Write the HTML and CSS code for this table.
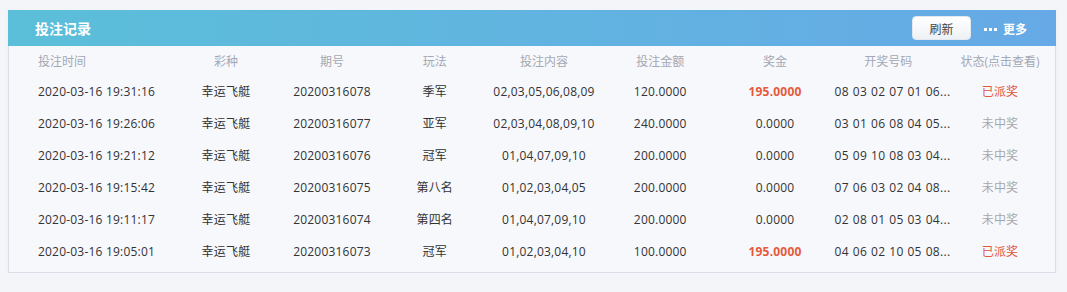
FILE: index.html
```html
<!DOCTYPE html>
<html lang="zh-CN">
<head>
    <meta charset="UTF-8">
    <title>投注记录</title>
    <link rel="stylesheet" href="styles.css">
</head>
<body>
    <div class="panel">
        <!-- Header bar -->
        <div class="panel-head">
            <h2>投注记录</h2>
            <div class="head-actions">
                <button class="refresh">刷新</button>
                <a class="more"><span class="dots"></span>更多</a>
            </div>
        </div>

        <!-- Records -->
        <div class="records">
            <div class="row head">
                <div class="first">投注时间</div>
                <div>彩种</div>
                <div>期号</div>
                <div>玩法</div>
                <div>投注内容</div>
                <div>投注金额</div>
                <div>奖金</div>
                <div>开奖号码</div>
                <div>状态(点击查看)</div>
            </div>
            <div class="row">
                <div class="first">2020-03-16 19:31:16</div>
                <div>幸运飞艇</div>
                <div>20200316078</div>
                <div>季军</div>
                <div>02,03,05,06,08,09</div>
                <div>120.0000</div>
                <div class="win">195.0000</div>
                <div class="nums">08 03 02 07 01 06...</div>
                <div class="paid">已派奖</div>
            </div>
            <div class="row">
                <div class="first">2020-03-16 19:26:06</div>
                <div>幸运飞艇</div>
                <div>20200316077</div>
                <div>亚军</div>
                <div>02,03,04,08,09,10</div>
                <div>240.0000</div>
                <div>0.0000</div>
                <div class="nums">03 01 06 08 04 05...</div>
                <div class="lost">未中奖</div>
            </div>
            <div class="row">
                <div class="first">2020-03-16 19:21:12</div>
                <div>幸运飞艇</div>
                <div>20200316076</div>
                <div>冠军</div>
                <div>01,04,07,09,10</div>
                <div>200.0000</div>
                <div>0.0000</div>
                <div class="nums">05 09 10 08 03 04...</div>
                <div class="lost">未中奖</div>
            </div>
            <div class="row">
                <div class="first">2020-03-16 19:15:42</div>
                <div>幸运飞艇</div>
                <div>20200316075</div>
                <div>第八名</div>
                <div>01,02,03,04,05</div>
                <div>200.0000</div>
                <div>0.0000</div>
                <div class="nums">07 06 03 02 04 08...</div>
                <div class="lost">未中奖</div>
            </div>
            <div class="row">
                <div class="first">2020-03-16 19:11:17</div>
                <div>幸运飞艇</div>
                <div>20200316074</div>
                <div>第四名</div>
                <div>01,04,07,09,10</div>
                <div>200.0000</div>
                <div>0.0000</div>
                <div class="nums">02 08 01 05 03 04...</div>
                <div class="lost">未中奖</div>
            </div>
            <div class="row">
                <div class="first">2020-03-16 19:05:01</div>
                <div>幸运飞艇</div>
                <div>20200316073</div>
                <div>冠军</div>
                <div>01,02,03,04,10</div>
                <div>100.0000</div>
                <div class="win">195.0000</div>
                <div class="nums">04 06 02 10 05 08...</div>
                <div class="paid">已派奖</div>
            </div>
        </div>
    </div>
</body>
</html>
```
FILE: styles.css
```css
* {
    margin: 0;
    padding: 0;
    box-sizing: border-box;
}

body {
    font-family: "Open Sans", "Noto Sans CJK SC", sans-serif;
    background: #f4f5f8;
    color: #333;
    font-size: 12px;
    padding: 10px 11px 0 8px;
}

.panel {
    background: #f7f8fc;
    border: 1px solid #d9dee8;
    border-top: none;
    box-shadow: 0 2px 4px rgba(0, 0, 0, 0.04);
    padding-bottom: 5px;
}

/* Header bar */
.panel-head {
    height: 36px;
    display: flex;
    align-items: center;
    justify-content: space-between;
    padding: 0 29px 0 27px;
    background: linear-gradient(to right, #5bbfd9, #66a9e6);
    margin: 0 -1px;
}

.panel-head h2 {
    font-family: "Noto Sans CJK SC", sans-serif;
    font-size: 14px;
    font-weight: 700;
    color: #fff;
}

.head-actions {
    display: flex;
    align-items: center;
    gap: 13px;
}

.refresh {
    width: 59px;
    height: 24px;
    border: 1px solid #e3e8ef;
    border-radius: 4px;
    background: linear-gradient(#ffffff, #eef1f5);
    font-family: "Noto Sans CJK SC", sans-serif;
    font-size: 12px;
    color: #444;
}

.more {
    display: flex;
    align-items: center;
    gap: 6px;
    color: #fff;
    font-family: "Noto Sans CJK SC", sans-serif;
    font-weight: 700;
    font-size: 12px;
}

/* three little squares before 更多 */
.more .dots {
    width: 13px;
    height: 3px;
    margin-top: 2px;
    background: linear-gradient(to right, #fff 0 3px, transparent 3px 5px, #fff 5px 8px, transparent 8px 10px, #fff 10px 13px);
}

/* Records */
.row {
    display: grid;
    grid-template-columns: 162.5px 109px 103px 102.5px 116px 116.5px 113px 113.5px 110px;
    height: 32px;
    align-items: center;
    text-align: center;
    letter-spacing: 0.2px;
    white-space: nowrap;
}

.row.head {
    height: 29px;
    color: #a3a8b3;
    letter-spacing: 0;
}

.row .first {
    text-align: left;
    padding-left: 29px;
}

.row .win {
    color: #e55a3b;
    font-weight: 700;
}

.row .nums {
    text-align: left;
    padding-left: 3px;
    letter-spacing: 0.3px;
    word-spacing: 0.5px;
}

.row .paid {
    color: #e0593e;
}

.row .lost {
    color: #a8a8a8;
}
```
